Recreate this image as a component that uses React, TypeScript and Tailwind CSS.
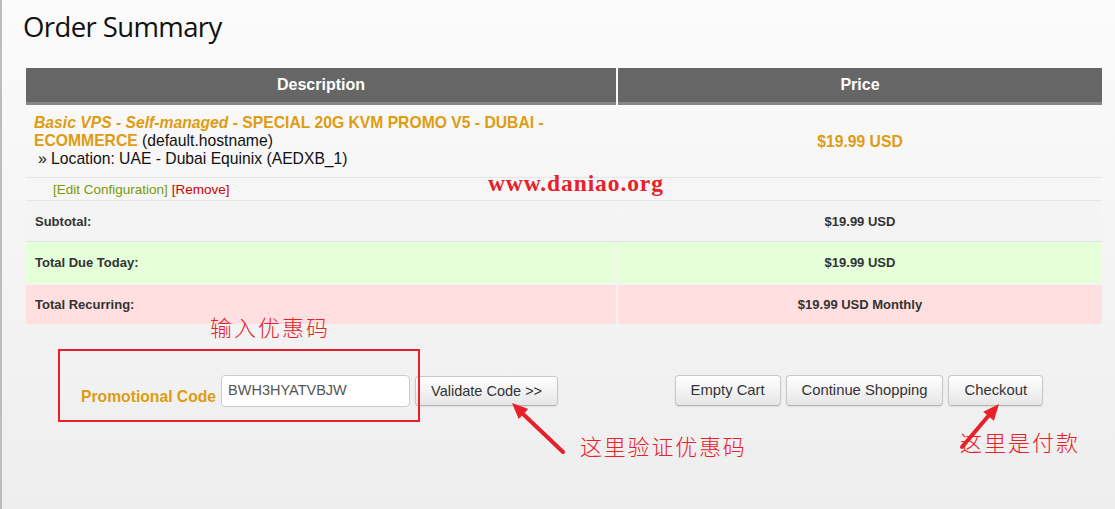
import React from "react";

const btn =
  "h-[31px] px-[15px] rounded-[4px] border border-[#c8c8c8] border-b-[#b3b3b3] bg-gradient-to-b from-[#ffffff] to-[#e6e6e6] text-[14.8px] text-[#333] leading-none shadow-[inset_0_1px_0_rgba(255,255,255,0.3),0_1px_2px_rgba(0,0,0,0.08)] whitespace-nowrap";

export default function App() {
  return (
    <div className="relative w-[1115px] h-[509px] overflow-hidden border-l-2 border-[#bdbdbd] bg-gradient-to-b from-[#fbfbfb] to-[#eeeeee] font-['Liberation_Sans',Arial,sans-serif] text-[#111]">
      <div className="h-[68px] pl-[21px] pt-[9px]">
        <h1 className="font-['Open_Sans',sans-serif] text-[27.5px] leading-[36px] tracking-[-0.6px] text-[#111]">
          Order Summary
        </h1>
      </div>

      <div className="ml-[24px] w-[1076px]">
        {/* header */}
        <div className="flex gap-[2px]">
          <div className="w-[590px] h-[37px] bg-[#666666] border-b-[3px] border-[#888888] flex items-center justify-center text-white font-bold text-[16px]">
            Description
          </div>
          <div className="flex-1 h-[37px] bg-[#666666] border-b-[3px] border-[#888888] flex items-center justify-center text-white font-bold text-[16px]">
            Price
          </div>
        </div>

        {/* product row */}
        <div className="flex gap-[2px] border-b border-[#e6e6e6]">
          <div className="w-[590px] h-[72px] px-[8px] pt-[9px] text-[15.7px] leading-[18px] text-[#111]">
            <span className="text-[#df9c12] font-bold">
              <i>Basic VPS - Self-managed</i> - SPECIAL 20G KVM PROMO V5 - DUBAI - ECOMMERCE
            </span>{" "}
            (default.hostname)
            <br />
            <span className="pl-[4px]">» Location: UAE - Dubai Equinix (AEDXB_1)</span>
          </div>
          <div className="flex-1 h-[72px] pt-[2px] flex items-center justify-center text-[15.7px] font-bold text-[#df9c12]">
            $19.99 USD
          </div>
        </div>

        {/* edit row */}
        <div className="flex gap-[2px] border-b border-[#e6e6e6]">
          <div className="w-[590px] h-[22px] pl-[27px] pt-[2px] flex items-center text-[13.5px]">
            <span className="text-[#7a9802]">[Edit Configuration]</span>
            <span className="ml-[4px] text-[#d20000]">[Remove]</span>
          </div>
          <div className="flex-1 h-[22px]" />
        </div>

        {/* subtotal */}
        <div className="flex gap-[2px] border-b border-[#e2e2e2]">
          <div className="w-[590px] h-[40px] bg-[#f4f4f4] pl-[9px] pt-[2px] flex items-center text-[13px] font-bold text-[#333]">
            Subtotal:
          </div>
          <div className="flex-1 h-[40px] bg-[#f4f4f4] pt-[2px] flex items-center justify-center text-[13px] font-bold text-[#333]">
            $19.99 USD
          </div>
        </div>

        {/* total due */}
        <div className="flex gap-[2px]">
          <div className="w-[590px] h-[41px] bg-[#e5ffd9] pl-[9px] pt-[1px] flex items-center text-[13px] font-bold text-[#333]">
            Total Due Today:
          </div>
          <div className="flex-1 h-[41px] bg-[#e5ffd9] pt-[1px] flex items-center justify-center text-[13px] font-bold text-[#333]">
            $19.99 USD
          </div>
        </div>

        {/* recurring */}
        <div className="flex gap-[2px] mt-[2px]">
          <div className="w-[590px] h-[39px] bg-[#ffdfdf] pl-[9px] flex items-center text-[13px] font-bold text-[#333]">
            Total Recurring:
          </div>
          <div className="flex-1 h-[39px] bg-[#ffdfdf] flex items-center justify-center text-[13px] font-bold text-[#333]">
            $19.99 USD Monthly
          </div>
        </div>
      </div>

      {/* promo + actions */}
      <div className="mt-[51px] ml-[79px] w-[962px] flex justify-between items-start">
        <div className="flex items-start">
          <span className="mt-[10px] text-[15.7px] font-bold text-[#df9c12] whitespace-nowrap">Promotional Code</span>
          <div className="ml-[5px] w-[189px] h-[32px] rounded-[4px] border border-[#cccccc] bg-white px-[6px] flex items-center text-[14.5px] text-[#555]">
            BWH3HYATVBJW
          </div>
          <button className={btn + " ml-[5px] mt-[1px] !h-[30px] !text-[14.5px] !px-[15px]"}>Validate Code &gt;&gt;</button>
        </div>
        <div className="flex gap-[5px]">
          <button className={btn}>Empty Cart</button>
          <button className={btn}>Continue Shopping</button>
          <button className={btn}>Checkout</button>
        </div>
      </div>

      {/* annotations overlay */}
      <div className="absolute left-[-2px] top-0 w-[1115px] h-[509px] pointer-events-none">
        <div className="absolute left-[488px] top-[168px] text-[23.5px] leading-[30px] font-bold text-[#e8202a] font-['Liberation_Serif','Times_New_Roman',serif] tracking-[0.9px]">
          www.daniao.org
        </div>
        <div className="absolute left-[210px] top-[312px] text-[22px] leading-[28px] text-[#e8202a] font-['Noto_Sans_CJK_SC',sans-serif] font-light tracking-[2px]">
          输入优惠码
        </div>
        <div className="absolute left-[580px] top-[431px] text-[22px] leading-[28px] text-[#e8202a] font-['Noto_Sans_CJK_SC',sans-serif] font-light tracking-[1.8px]">
          这里验证优惠码
        </div>
        <div className="absolute left-[960px] top-[427px] text-[22px] leading-[28px] text-[#e8202a] font-['Noto_Sans_CJK_SC',sans-serif] font-light tracking-[2px]">
          这里是付款
        </div>
        <div className="absolute left-[58px] top-[349px] w-[362px] h-[73px] border-2 border-[#e8202a]" />
        <svg className="absolute left-0 top-0" width="1115" height="509" viewBox="0 0 1115 509">
          <line x1="563" y1="452" x2="522" y2="413" stroke="#e8202a" strokeWidth="4" strokeLinecap="round" />
          <polygon points="512,403 528.3,409.1 518.7,419.1" fill="#e8202a" />
          <line x1="962" y1="447" x2="990" y2="414" stroke="#e8202a" strokeWidth="4" strokeLinecap="round" />
          <polygon points="999,404 993.9,420.7 983.3,411.7" fill="#e8202a" />
        </svg>
      </div>
    </div>
  );
}
